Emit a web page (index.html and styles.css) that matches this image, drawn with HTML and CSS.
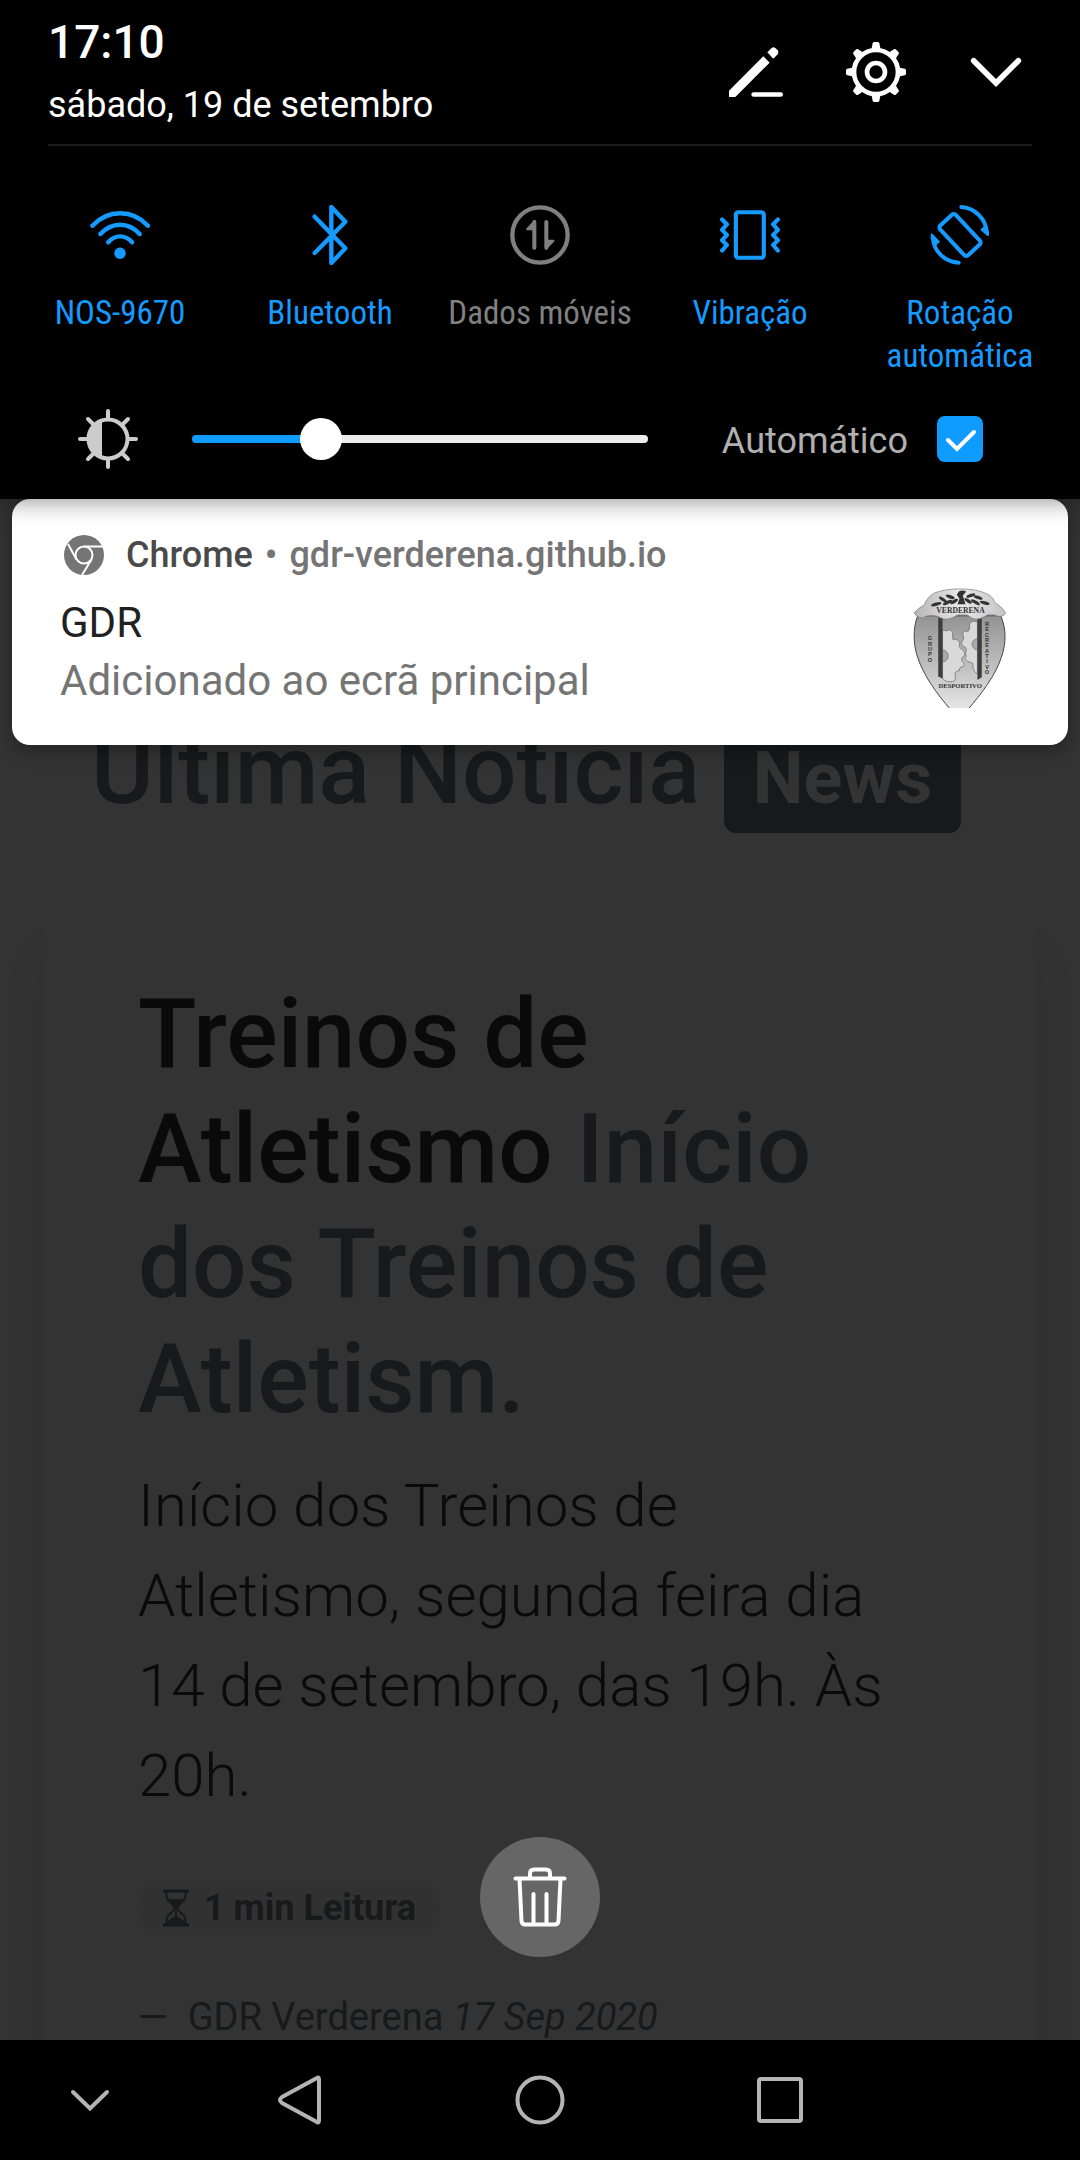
FILE: index.html
```html
<!DOCTYPE html>
<html lang="pt">
<head>
<meta charset="utf-8">
<meta name="viewport" content="width=device-width, initial-scale=1">
<title>GDR Verderena</title>
<link rel="stylesheet" href="styles.css">
</head>
<body>
<div class="screen">
  <main class="page">
    <h1 class="page-title">Última Notícia <span class="tag">News</span></h1>
    <article class="post">
      <h2 class="post-title">Treinos de Atletismo <span class="muted">Início dos Treinos de Atletism.</span></h2>
      <p class="lead">Início dos Treinos de Atletismo, segunda feira dia 14 de setembro, das 19h. Às 20h.</p>
      <p class="reading">
        <svg class="hourglass" viewBox="0 0 28 38" aria-hidden="true"><path d="M1 2h26M1 36h26" stroke="currentColor" stroke-width="3" fill="none"/><path d="M4.500 2v5c0 6 8 8 8 12s-8 6-8 12v5M23.500 2v5c0 6-8 8-8 12s8 6 8 12v5" fill="none" stroke="currentColor" stroke-width="2"/><path d="M5 10h18c-2 4-7 5-8 9l-1 1-1-1c-1-4-6-5-8-9zM5 35c1-5 5-5 8-8v-8h2v8c3 3 7 3 8 8z" fill="currentColor"/></svg>
        <span>1 min Leitura</span>
      </p>
      <footer class="byline"><span>—</span><span>GDR Verderena <cite>17 Sep 2020</cite></span></footer>
    </article>
  </main>

  <div class="shade">
    <section class="panel">
      <header class="head">
        <div class="clock">
          <time class="time">17:10</time>
          <span class="date">sábado, 19 de setembro</span>
        </div>
        <div class="tools">
          <button type="button" class="icon-button" aria-label="Editar"><svg class="icon" viewBox="78 66 180 180"><path d="M87 231V212L190 109L209 128L106 231Z" fill="currentColor"/><path d="M202 97L215 84Q220 79 226 84L233 91Q238 97 233 103L220 116Z" fill="currentColor"/><path d="M161 223.500H242" stroke="currentColor" stroke-width="14" stroke-linecap="round"/></svg></button>
          <button type="button" class="icon-button" aria-label="Definições"><svg class="icon" viewBox="438 66 180 180"><g fill="none" stroke="currentColor"><circle cx="528" cy="156" r="66" stroke-width="14"/><circle cx="528" cy="156" r="27" stroke-width="14"/></g><g fill="currentColor"><path id="cog" d="M513 94L518 70Q519 66 523 66H533Q537 66 538 70L543 94Z"/><use href="#cog" transform="rotate(45 528 156)"/><use href="#cog" transform="rotate(90 528 156)"/><use href="#cog" transform="rotate(135 528 156)"/><use href="#cog" transform="rotate(180 528 156)"/><use href="#cog" transform="rotate(225 528 156)"/><use href="#cog" transform="rotate(270 528 156)"/><use href="#cog" transform="rotate(315 528 156)"/></g></svg></button>
          <button type="button" class="icon-button" aria-label="Recolher"><svg class="icon" viewBox="798 66 180 180"><path d="M821 122L888 189L955 122" fill="none" stroke="currentColor" stroke-width="17" stroke-linecap="round"/></svg></button>
        </div>
      </header>

      <div class="tiles">
        <button type="button" class="tile"><svg class="icon" viewBox="261 78 174 174"><g fill="none" stroke="currentColor" stroke-width="13" stroke-linecap="round"><path d="M268 138Q302 102 348.500 102T429 138"/><path d="M291 162Q316 135 348.500 135T405 162"/><path d="M314 186Q329 169 348.500 169T383 186"/></g><circle cx="348" cy="218" r="16.500" fill="currentColor"/></svg><span>NOS-9670</span></button>
        <button type="button" class="tile"><svg class="icon" viewBox="871 75 174 180"><path d="M912 110L1004 205L962 249V81L1004 125L912 219" fill="none" stroke="currentColor" stroke-width="13" stroke-linecap="round" stroke-linejoin="round"/></svg><span>Bluetooth</span></button>
        <button type="button" class="tile off"><svg class="icon" viewBox="-90 75 180 180"><circle cx="0" cy="165" r="83" fill="none" stroke="currentColor" stroke-width="13"/><path d="M-17 126V203M19 126V203" stroke="currentColor" stroke-width="12" stroke-linecap="round"/><path d="M-13 120V151H-38Q-44 150 -40 145L-18 121ZM15 209V179H40Q46 180 42 185L20 208Z" fill="currentColor"/></svg><span>Dados móveis</span></button>
        <button type="button" class="tile"><svg class="icon" viewBox="523 78 174 174"><g fill="none" stroke="currentColor" stroke-width="12" stroke-linecap="round" stroke-linejoin="round"><rect x="569" y="99" width="81" height="132" rx="7"/><path d="M529 120L543 134L529 150L543 165L529 180L543 194L529 210M691 120L677 134L691 150L677 165L691 180L677 194L691 210"/></g></svg><span>Vibração</span></button>
        <button type="button" class="tile"><svg class="icon" viewBox="1130 75 180 180"><g fill="none" stroke="currentColor" stroke-width="12" stroke-linecap="round"><rect x="1188" y="104" width="64" height="122" rx="8" transform="rotate(-43 1220 165)"/><path d="M1224 81C1264 83 1298 117 1300 156M1216 248C1175 246 1141 214 1139 174"/></g><path d="M1281 149L1296 134L1307 155V166Q1305 170 1301 167ZM1160 185L1143 200L1132 175V163Q1134 159 1138 162Z" fill="currentColor"/></svg><span>Rotação automática</span></button>
      </div>

      <div class="brightness">
        <svg class="icon sun" viewBox="0 0 60 60" aria-hidden="true"><g fill="none" stroke="currentColor" stroke-width="4" stroke-linecap="round"><circle cx="30" cy="30" r="19.500"/><path d="M30 2v8M30 50v8M2 30h8M50 30h8M10 10l6 6M44 44l6 6M50 10l-6 6M16 44l-6 6"/></g><path d="M24 11A20 20 0 0 0 24 49Z" fill="currentColor"/></svg>
        <input class="slider" type="range" min="0" max="100" value="26" aria-label="Brilho">
        <label class="auto" for="auto">Automático</label>
        <input class="check" type="checkbox" id="auto" checked>
      </div>
    </section>

    <article class="notice">
      <div class="notice-text">
        <p class="source">
          <svg class="chrome" viewBox="0 0 40 40" aria-hidden="true"><circle cx="20" cy="20" r="20" fill="#757575"/><g fill="none" stroke="#fff" stroke-width="2"><circle cx="20" cy="20" r="8.500"/><path d="M20 11.500H39M12.500 24.500L4 9M27.500 24.500L18 40"/></g></svg>
          <b class="app">Chrome</b><span class="dot">•</span><span>gdr-verderena.github.io</span>
        </p>
        <h3 class="subject">GDR</h3>
        <p class="message">Adicionado ao ecrã principal</p>
      </div>
      <svg class="crest" viewBox="98 82 280 360" role="img" aria-label="Verderena">
        <defs>
          <linearGradient id="body" x1="0" y1="0" x2="0" y2="1"><stop offset="0" stop-color="#939393"/><stop offset=".5" stop-color="#bcbcbc"/><stop offset="1" stop-color="#e6e6e6"/></linearGradient>
          <linearGradient id="cap" x1="0" y1="0" x2="1" y2="0"><stop offset="0" stop-color="#b5b5b5"/><stop offset=".5" stop-color="#e8e8e8"/><stop offset="1" stop-color="#c4c4c4"/></linearGradient>
        </defs>
        <path d="M112 165C98 200 98 250 112 290C130 345 170 400 210 446H264C304 400 346 345 364 290C380 245 378 200 362 165Z" fill="url(#body)" stroke="#444" stroke-width="3"/>
        <path d="M187 207Q198 214 206 208Q216 206 217 220L218 236Q234 234 239 247Q234 260 245 266Q258 274 252 285Q240 292 246 303Q258 310 248 318Q236 320 238 330Q224 330 224 344Q230 358 220 362Q200 368 187 354Z" fill="#d9d9d9" stroke="#666" stroke-width="2"/>
        <path d="M292 184Q276 176 268 190Q272 204 264 212Q248 208 248 222Q254 236 246 242Q240 254 256 260Q262 268 256 278Q262 288 254 294Q262 304 272 306Q282 306 278 322Q282 336 292 340Z" fill="#d9d9d9" stroke="#666" stroke-width="2"/>
        <path d="M187 268A17 18 0 0 1 187 304ZM293 234A17 17 0 0 0 293 268Z" fill="#aaa" stroke="#666" stroke-width="2"/>
        <path d="M174 165H187V354L174 348ZM292 165H305V350L292 358Z" fill="#3d3d3d"/>
        <path d="M101 156Q114 142 132 132Q142 106 164 96Q194 84 240 84Q290 84 318 98Q338 106 344 124Q364 136 377 156Q370 170 352 166Q330 154 312 168Q286 184 264 164Q240 154 218 170Q194 182 170 166Q142 160 126 172Q108 170 101 156Z" fill="url(#cap)" stroke="#777" stroke-width="2"/>
        <g fill="#333"><path d="M236 92Q246 86 258 92L248 104L256 130H232L238 114L230 102Z"/><ellipse cx="210" cy="108" rx="14" ry="5" transform="rotate(20 210 108)"/><ellipse cx="188" cy="116" rx="14" ry="5" transform="rotate(35 188 116)"/><ellipse cx="202" cy="125" rx="15" ry="5" transform="rotate(-25 202 125)"/><ellipse cx="222" cy="122" rx="13" ry="5" transform="rotate(-30 222 122)"/><ellipse cx="168" cy="130" rx="16" ry="5" transform="rotate(-15 168 130)"/><ellipse cx="272" cy="104" rx="14" ry="5" transform="rotate(-20 272 104)"/><ellipse cx="294" cy="110" rx="14" ry="5" transform="rotate(20 294 110)"/><ellipse cx="286" cy="124" rx="15" ry="5" transform="rotate(30 286 124)"/><ellipse cx="264" cy="120" rx="13" ry="5" transform="rotate(35 264 120)"/><ellipse cx="314" cy="126" rx="15" ry="5" transform="rotate(15 314 126)"/></g>
        <g class="crest-text"><text x="241" y="158" font-size="23">VERDERENA</text><text x="240" y="382" font-size="20">DESPORTIVO</text></g>
        <g class="crest-side" font-size="17"><text x="149" y="239">G<tspan x="149" dy="16">R</tspan><tspan x="149" dy="16">U</tspan><tspan x="149" dy="16">P</tspan><tspan x="149" dy="16">O</tspan></text><text x="321" y="196">R<tspan x="321" dy="16">E</tspan><tspan x="321" dy="16">C</tspan><tspan x="321" dy="16">R</tspan><tspan x="321" dy="16">E</tspan><tspan x="321" dy="16">A</tspan><tspan x="321" dy="16">T</tspan><tspan x="321" dy="16">I</tspan><tspan x="321" dy="16">V</tspan><tspan x="321" dy="16">O</tspan></text></g>
      </svg>
    </article>

    <button type="button" class="clear" aria-label="Limpar notificações"><svg class="icon" viewBox="0 0 60 60"><g fill="none" stroke="currentColor" stroke-width="4" stroke-linecap="round" stroke-linejoin="round"><path d="M5.500 11.500H54.500"/><path d="M20 11V6.500Q20 2.500 24 2.500H36Q40 2.500 40 6.500V11"/><path d="M9.500 12L11.500 54Q12 57.500 15 57.500H45Q48 57.500 48.500 54L50.500 12"/><path d="M23.500 27V57M36.500 27V57"/></g></svg></button>
  </div>

  <nav class="navbar">
    <button type="button" class="nav-button" aria-label="Ocultar barra"><svg class="icon" viewBox="0 0 60 60"><path d="M13 22L30 38.500L47 22" fill="none" stroke="currentColor" stroke-width="4" stroke-linecap="round"/></svg></button>
    <button type="button" class="nav-button" aria-label="Voltar"><svg class="icon" viewBox="0 0 60 60"><path d="M49 9.500Q49 6 46 8.500L12 27Q8 30 12 33L46 51.500Q49 54 49 50.500Z" fill="none" stroke="currentColor" stroke-width="4" stroke-linejoin="round"/></svg></button>
    <button type="button" class="nav-button" aria-label="Início"><svg class="icon" viewBox="0 0 60 60"><circle cx="30" cy="30" r="22.500" fill="none" stroke="currentColor" stroke-width="4"/></svg></button>
    <button type="button" class="nav-button" aria-label="Recentes"><svg class="icon" viewBox="0 0 60 60"><rect x="9" y="9" width="42" height="42" rx="2" fill="none" stroke="currentColor" stroke-width="4"/></svg></button>
  </nav>
</div>
</body>
</html>
```
FILE: styles.css
```css
* {
  box-sizing: border-box;
}

body {
  margin: 0;
  background: #000;
  font-family: Roboto, "Liberation Sans", sans-serif;
}

h1, h2, h3, p {
  margin: 0;
  font-weight: 400;
}

button {
  border: 0;
  padding: 0;
  background: none;
  color: inherit;
  font: inherit;
}

.icon {
  display: block;
  width: 60px;
  height: 60px;
}

/* The web page and the notification shade share the first grid cell */
.screen {
  display: grid;
  grid-template-rows: minmax(0, 1fr) auto;
  grid-template-columns: minmax(0, 1fr);
  height: 100vh;
}

.page,
.shade {
  grid-area: 1 / 1;
  min-height: 0;
}

.page {
  overflow: hidden;
  padding: 713px 45px 0;
  background: #333;
  color: #17191a;
}

.page-title {
  padding-left: 46px;
  font-size: 96px;
  font-weight: 500;
  line-height: 115px;
}

.tag {
  display: inline-block;
  padding: 18px 29px;
  border-radius: 12px;
  background: #17191a;
  color: #333;
  font-size: 72px;
  font-weight: 700;
  line-height: 72px;
}

.post {
  margin-top: 88px;
  padding: 56px 93px 60px;
  border-radius: 12px;
  box-shadow: 0 36px 48px rgba(0, 0, 0, 0.08);
}

.post-title {
  color: #0a0a0a;
  font-size: 96px;
  font-weight: 500;
  line-height: 115px;
}

.muted {
  color: #17191a;
}

.lead {
  margin-top: 24px;
  color: #0a0a0a;
  font-size: 60px;
  font-weight: 300;
  line-height: 90px;
}

.reading {
  display: flex;
  align-items: center;
  gap: 14px;
  width: fit-content;
  margin-top: 60px;
  padding: 8px 24px;
  border-radius: 28px;
  background: #313131;
  font-size: 36px;
  font-weight: 700;
  line-height: 36px;
}

.hourglass {
  width: 28px;
  height: 38px;
}

.byline {
  display: flex;
  gap: 20px;
  margin-top: 54px;
  font-size: 38px;
  line-height: 57px;
}

.shade {
  display: flex;
  flex-direction: column;
  z-index: 1;
}

.panel {
  z-index: 1;
  padding-bottom: 30px;
  background: #000;
  box-shadow: 0 0 24px rgba(0, 0, 0, 0.5);
  color: #fff;
}

.head {
  display: flex;
  justify-content: space-between;
  align-items: center;
  margin: 0 48px;
  padding: 14px 6px 18px 0;
  border-bottom: 2px solid #1c1c1c;
}

.clock {
  display: flex;
  flex-direction: column;
  gap: 14px;
}

.time {
  font-size: 46px;
  font-weight: 500;
  line-height: 56px;
}

.date {
  font-size: 36px;
  line-height: 42px;
}

.tools {
  display: flex;
  gap: 60px;
  padding-top: 4px;
}

.tiles {
  display: grid;
  grid-template-columns: repeat(5, 1fr);
  margin: 59px 15px 0;
}

.tile {
  display: flex;
  flex-direction: column;
  align-items: center;
  gap: 26px;
  color: #159aff;
  font-family: "Roboto Condensed", Roboto, sans-serif;
  font-size: 33px;
  line-height: 43px;
}

.tile.off {
  color: #808080;
}

.brightness {
  display: flex;
  align-items: center;
  margin-top: 32px;
  padding: 0 97px 0 78px;
}

.sun {
  flex: none;
  color: #ccc;
}

.slider {
  flex: 1;
  min-width: 0;
  height: 42px;
  margin: 0 74px 0 54px;
  background: none;
  appearance: none;
}

.slider::-webkit-slider-runnable-track {
  height: 8px;
  border-radius: 4px;
  background: linear-gradient(to right, #109cff 28%, #ececec 28%);
}

.slider::-webkit-slider-thumb {
  width: 42px;
  height: 42px;
  margin-top: -17px;
  border-radius: 50%;
  background: #fff;
  appearance: none;
}

.auto {
  padding-top: 4px;
  color: #b0b0b0;
  font-size: 36px;
  line-height: 42px;
}

.check {
  width: 46px;
  height: 46px;
  margin: 0 0 0 29px;
  border-radius: 8px;
  background: #109cff url("data:image/svg+xml,%3Csvg xmlns='http://www.w3.org/2000/svg' viewBox='0 0 46 46'%3E%3Cpath d='M11 24l9 9 17-17' fill='none' stroke='%23fff' stroke-width='4' stroke-linecap='round'/%3E%3C/svg%3E");
  appearance: none;
}

.notice {
  display: flex;
  justify-content: space-between;
  align-items: flex-end;
  margin: 0 12px;
  padding: 35px 62px 35px 48px;
  border-radius: 18px;
  background: #fff;
  box-shadow: 0 6px 18px rgba(0, 0, 0, 0.3);
  color: #757575;
}

.source {
  display: flex;
  align-items: center;
  padding-left: 4px;
  font-size: 36px;
  font-weight: 500;
  line-height: 42px;
}

.chrome {
  width: 40px;
  height: 40px;
  margin-right: 22px;
}

.app {
  color: #4a4a4a;
  font-weight: 500;
}

.dot {
  margin: 0 12px;
}

.subject {
  margin-top: 18px;
  color: #212121;
  font-size: 42px;
  line-height: 58px;
}

.message {
  font-size: 42px;
  line-height: 58px;
}

.crest {
  width: 93px;
  height: 120px;
  margin-bottom: 2px;
}

.crest-text,
.crest-side {
  fill: #333;
  font-family: "Liberation Serif", serif;
  font-weight: 700;
  text-anchor: middle;
}

.crest-side {
  font-family: "Liberation Sans", sans-serif;
}

.clear {
  display: grid;
  place-items: center;
  width: 120px;
  height: 120px;
  margin: auto auto 83px;
  border-radius: 50%;
  background: #666;
  color: #fff;
}

.navbar {
  display: grid;
  grid-template-columns: 3fr 4fr 4fr 4fr 3fr;
  place-items: center;
  height: 120px;
  background: #000;
  color: #b4b4b4;
}
```
